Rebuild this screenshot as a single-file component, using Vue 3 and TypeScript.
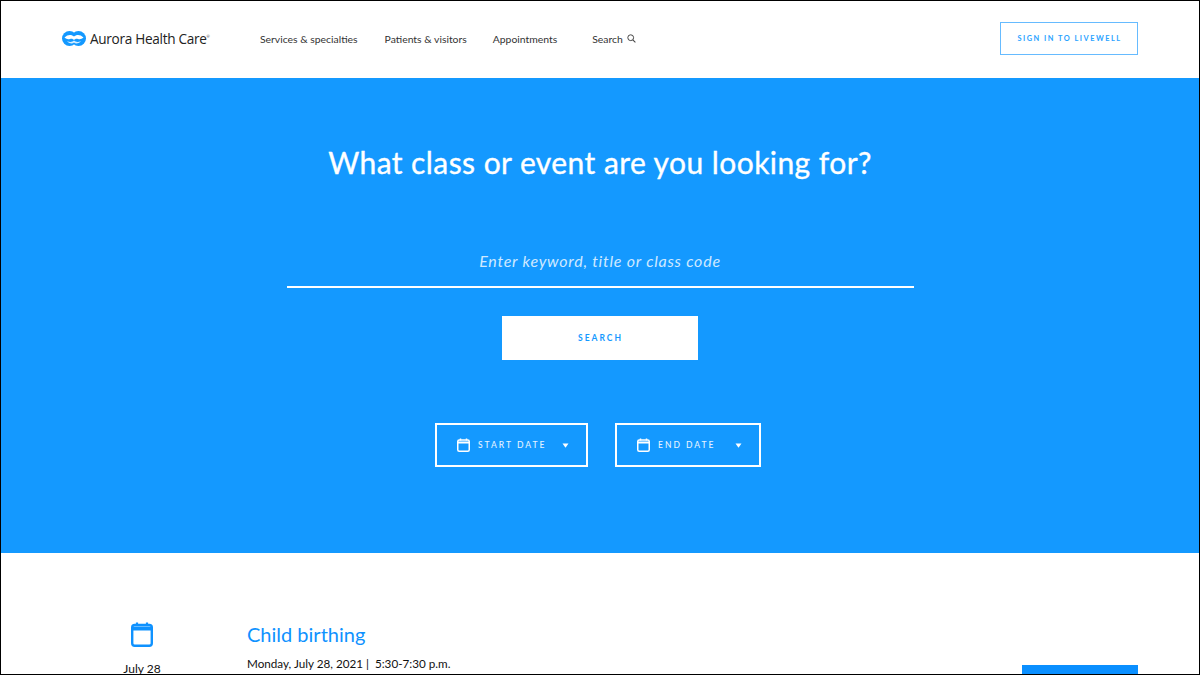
<script setup lang="ts">
const navItems = ['Services & specialties', 'Patients & visitors', 'Appointments']
const dateFilters = ['Start date', 'End date']
</script>

<template>
  <div class="page">
    <header class="topbar">
      <a class="logo">
        <svg width="24" height="15" viewBox="0 0 24 15" aria-hidden="true">
          <circle cx="7.5" cy="7.5" r="7.5" fill="#1499ff" />
          <circle cx="16.5" cy="7.5" r="7.5" fill="#1499ff" />
          <path d="M2.5 6.5C6 2.8 10 3.6 12 5.6C14 3.6 18 2.8 21.5 6.5C19.5 8.2 18 8.6 16 7.9C14 7.2 13 8 12 9C11 8 10 7.2 8 7.9C6 8.6 4.5 8.2 2.5 6.5Z" fill="#fff" />
          <path d="M5 10C8 11.8 10.5 11 12 9.6C13.5 11 16 11.8 19 10C16.5 13 13.5 13 12 11.6C10.5 13 7.5 13 5 10Z" fill="#d6eeff" />
        </svg>
        <span class="logo-text">Aurora Health Care</span><span class="logo-reg">®</span>
      </a>
      <nav class="nav">
        <a v-for="item in navItems" :key="item" class="nav-link">{{ item }}</a>
        <a class="nav-link nav-search">
          Search
          <svg width="9" height="9" viewBox="0 0 9 9" aria-hidden="true">
            <circle cx="3.7" cy="3.7" r="2.9" fill="none" stroke="#444" stroke-width="1" />
            <path d="M5.8 5.8L8.4 8.4" stroke="#444" stroke-width="1.1" />
          </svg>
        </a>
      </nav>
      <button class="signin">Sign in to LiveWell</button>
    </header>

    <section class="hero">
      <h1 class="hero-title">What class or event are you looking for?</h1>
      <div class="search-field">Enter keyword, title or class code</div>
      <button class="search-btn">Search</button>
      <div class="dates">
        <button v-for="label in dateFilters" :key="label" class="date-btn">
          <svg class="cal" width="13" height="14" viewBox="0 0 13 14" aria-hidden="true">
            <rect x="0.75" y="2" width="11.5" height="11.25" rx="1.5" fill="none" stroke="#fff" stroke-width="1.5" />
            <path d="M0.75 4.5H12.25" stroke="#fff" stroke-width="2" />
            <path d="M3.5 0.5V2.5M9.5 0.5V2.5" stroke="#fff" stroke-width="1.5" />
          </svg>
          <span class="date-label">{{ label }}</span>
          <svg class="caret" width="7" height="5" viewBox="0 0 7 5" aria-hidden="true">
            <path d="M0.5 0.5H6.5L3.5 4.8Z" fill="#fff" />
          </svg>
        </button>
      </div>
    </section>

    <section class="event">
      <div class="event-date">
        <svg width="22" height="25" viewBox="0 0 22 25" aria-hidden="true">
          <rect x="1.2" y="3" width="19.6" height="20.8" rx="2.5" fill="none" stroke="#0f92ff" stroke-width="2.4" />
          <path d="M1.2 6.5H20.8" stroke="#0f92ff" stroke-width="4" />
          <path d="M6 0.5V4M16 0.5V4" stroke="#0f92ff" stroke-width="2.2" />
        </svg>
        <span class="event-day">July 28</span>
      </div>
      <div class="event-info">
        <h2 class="event-title">Child birthing</h2>
        <p class="event-when">Monday, July 28, 2021 |&nbsp; 5:30-7:30 p.m.</p>
      </div>
      <div class="event-action"></div>
    </section>
  </div>
</template>

<style>
html,
body {
  margin: 0;
  background: #fff;
}
</style>

<style scoped>
.page {
  width: 1200px;
  height: 675px;
  box-sizing: border-box;
  border: 1px solid #000;
  overflow: hidden;
  font-family: Lato, "Open Sans", sans-serif;
  background: #fff;
}

.topbar {
  height: 77px;
  box-sizing: border-box;
  display: flex;
  align-items: center;
  padding: 0 61px 2px;
}

.logo {
  display: flex;
  align-items: center;
  width: 198px;
  color: #222;
}

.logo svg {
  flex: none;
  margin-right: 4px;
}

.logo-text {
  font-family: "Open Sans", sans-serif;
  font-size: 13.6px;
  letter-spacing: -0.3px;
  white-space: nowrap;
}

.logo-reg {
  font-size: 4px;
  margin-bottom: 4px;
}

.nav {
  display: flex;
  align-items: center;
  flex: 1;
  color: #333;
  font-size: 10.4px;
}

.nav-link {
  white-space: nowrap;
  margin-right: 26px;
}

.nav-link:first-child {
  margin-right: 27px;
}

.nav-search {
  display: flex;
  align-items: center;
  gap: 4px;
  margin-left: 9px;
}

.signin {
  width: 138px;
  height: 33px;
  box-sizing: border-box;
  border: 1px solid #66bbff;
  background: #fff;
  color: #2ba3ff;
  font: 700 7.4px Lato, sans-serif;
  letter-spacing: 1.5px;
  text-transform: uppercase;
  padding: 0 0 0 1px;
}

.hero {
  height: 475px;
  box-sizing: border-box;
  background: #1499ff;
  display: flex;
  flex-direction: column;
  align-items: center;
  padding-top: 65px;
  color: #fff;
}

.hero-title {
  margin: 0;
  font-size: 30px;
  line-height: 38px;
  font-weight: 400;
  letter-spacing: 0.43px;
  -webkit-text-stroke: 0.35px #fff;
}

.search-field {
  width: 627px;
  margin-top: 61px;
  height: 46px;
  box-sizing: border-box;
  line-height: 38px;
  border-bottom: 2px solid #fff;
  text-align: center;
  font-size: 16px;
  font-style: italic;
  letter-spacing: 0.75px;
  color: #cfe9ff;
}

.search-btn {
  width: 196px;
  height: 44px;
  margin-top: 28px;
  border: 0;
  background: #fff;
  color: #1499ff;
  font: 700 8.5px Lato, sans-serif;
  letter-spacing: 2px;
  text-transform: uppercase;
  padding: 0 0 0 1px;
}

.dates {
  display: flex;
  gap: 27px;
  margin-top: 63px;
  margin-right: 4px;
}

.date-btn {
  width: 146px;
  height: 44px;
  box-sizing: border-box;
  border: 2px solid #fff;
  background: transparent;
  color: #e4f3ff;
  display: flex;
  align-items: center;
  padding: 0 17px 0 20px;
  font: 500 8.5px Lato, sans-serif;
  letter-spacing: 2px;
  text-transform: uppercase;
}

.date-btn:first-child {
  width: 153px;
}

.cal {
  margin-right: 8px;
}

.date-label {
  white-space: nowrap;
}

.caret {
  margin-left: auto;
}

.event {
  display: flex;
  align-items: flex-start;
  padding: 69px 61px 0 0;
}

.event-date {
  width: 246px;
  box-sizing: border-box;
  display: flex;
  flex-direction: column;
  align-items: center;
  gap: 15px;
  flex: none;
  padding-left: 36px;
  color: #111;
}

.event-day {
  font-size: 12px;
  line-height: 14px;
}

.event-info {
  flex: 1;
}

.event-title {
  margin: 0;
  color: #0f92ff;
  font-size: 20px;
  line-height: 24px;
  font-weight: 400;
}

.event-when {
  margin: 9px 0 0;
  font-size: 11.7px;
  line-height: 16px;
  color: #111;
}

.event-action {
  width: 116px;
  height: 44px;
  margin-top: 43px;
  background: #0a8fff;
}
</style>
